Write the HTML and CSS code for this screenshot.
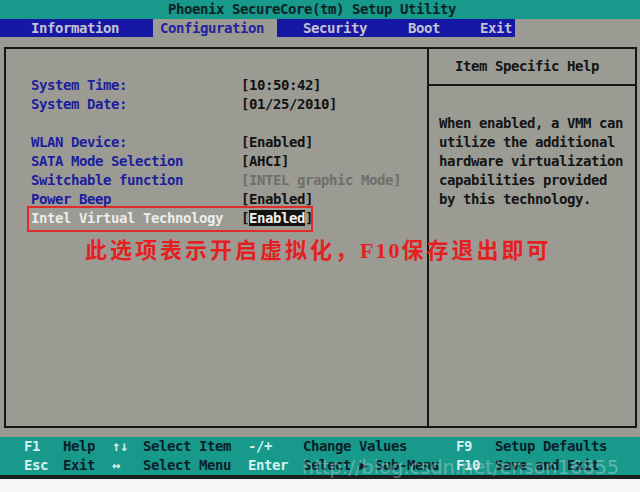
FILE: index.html
```html
<!DOCTYPE html>
<html lang="en">
<head>
<meta charset="utf-8">
<title>Phoenix SecureCore(tm) Setup Utility</title>
<link rel="stylesheet" href="styles.css">
</head>
<body>
<div class="screen">
  <div class="titlebar">Phoenix SecureCore(tm) Setup Utility</div>
  <div class="menubar">
    <div class="menu-items">
      <span class="menu-item m-info">Information</span>
      <span class="menu-item m-config active">Configuration</span>
      <span class="menu-item m-sec">Security</span>
      <span class="menu-item m-boot">Boot</span>
      <span class="menu-item m-exit">Exit</span>
    </div>
  </div>
  <div class="main">
    <div class="panel">
      <div class="settings">
        <div class="rows">
          <div class="row"><span class="label">System Time:</span><span class="value">[10:50:42]</span></div>
          <div class="row"><span class="label">System Date:</span><span class="value">[01/25/2010]</span></div>
          <div class="row spacer"></div>
          <div class="row"><span class="label">WLAN Device:</span><span class="value">[Enabled]</span></div>
          <div class="row"><span class="label">SATA Mode Selection</span><span class="value">[AHCI]</span></div>
          <div class="row"><span class="label">Switchable function</span><span class="value disabled">[INTEL graphic Mode]</span></div>
          <div class="row"><span class="label">Power Beep</span><span class="value">[Enabled]</span></div>
          <div class="row highlight"><span class="label selected">Intel Virtual Technology</span><span class="value">[<span class="cursor">Enabled</span>]</span></div>
        </div>
        <div class="note">此选项表示开启虚拟化，<span class="latin">F10</span>保存退出即可</div>
      </div>
      <div class="help">
        <div class="help-title">Item Specific Help</div>
        <div class="help-text">When enabled, a VMM can<br>utilize the additional<br>hardware virtualization<br>capabilities provided<br>by this technology.</div>
      </div>
    </div>
  </div>
  <div class="footer">
    <span class="key">F1</span><span class="desc">Help</span><span class="key">↑↓</span><span class="desc">Select Item</span><span class="key">-/+</span><span class="desc">Change Values</span><span class="key">F9</span><span class="desc">Setup Defaults</span>
    <span class="key">Esc</span><span class="desc">Exit</span><span class="key">↔</span><span class="desc">Select Menu</span><span class="key">Enter</span><span class="desc">Select ▶ Sub-Menu</span><span class="key">F10</span><span class="desc">Save and Exit</span>
  </div>
  <div class="strip"></div>
  <div class="below"></div>
  <div class="watermark">http://blog.csdn.net/enson16855</div>
</div>
</body>
</html>
```

FILE: styles.css
```css
html, body {
  margin: 0;
  padding: 0;
}

body {
  background: #f4f4f4;
}

.screen {
  position: relative;
  width: 640px;
  height: 492px;
  overflow: hidden;
  display: flex;
  flex-direction: column;
  font-family: "DejaVu Sans Mono", "Liberation Mono", monospace;
  font-weight: 700;
  font-size: 14px;
  letter-spacing: -0.43px;
  background: #9b9b93;
}

.titlebar {
  height: 19px;
  line-height: 19px;
  background: #17998b;
  color: #0b2326;
  padding-left: 168px;
  white-space: pre;
}

.menubar {
  height: 18px;
  line-height: 18px;
  display: flex;
  background: #9b9b93;
}

.menu-items {
  width: 515px;
  display: flex;
  background: #1717a6;
  color: #c3c3d3;
  white-space: pre;
}

.m-info { margin-left: 31px; }
.m-config { margin-left: 34px; padding: 0 13px 0 7px; }
.m-sec { margin-left: 26px; }
.m-boot { margin-left: 41px; }
.m-exit { margin-left: 40px; }

.menu-item.active {
  background: #9b9b93;
  color: #22229c;
}

.main {
  height: 400px;
  box-sizing: border-box;
  padding: 10px 3px 9px 4px;
}

.panel {
  height: 381px;
  box-sizing: border-box;
  border: 2px solid #151515;
  display: grid;
  grid-template-columns: 423px 1fr;
}

.settings {
  border-right: 2px solid #151515;
  padding: 27px 0 0 25px;
}

.row {
  display: grid;
  grid-template-columns: 210px auto;
  height: 19px;
  line-height: 19px;
  white-space: pre;
}

.label {
  color: #1d1d9e;
}

.value {
  color: #121212;
}

.value.disabled {
  color: #6f6f6b;
}

.row.highlight {
  width: 286px;
  height: 26px;
  box-sizing: border-box;
  margin: -3px 0 0 -4px;
  padding: 1px 0 2px 2px;
  border: 2px solid #e12a2a;
}

.label.selected {
  color: #ececec;
}

.cursor {
  background: #121212;
  color: #f2f2f2;
}

.note {
  margin: 3px 0 0 54px;
  font-family: "Noto Sans CJK SC", sans-serif;
  font-weight: 700;
  font-size: 22px;
  line-height: 26px;
  letter-spacing: 3px;
  color: #e51f1f;
  white-space: nowrap;
}

.note .latin {
  font-family: "Liberation Serif", serif;
  font-weight: 700;
  font-size: 22px;
  letter-spacing: 2px;
}

.help-title {
  height: 37px;
  box-sizing: border-box;
  border-bottom: 2px solid #151515;
  padding: 8px 0 0 26px;
  line-height: 19px;
  color: #141414;
  white-space: pre;
}

.help-text {
  padding: 28px 0 0 10px;
  line-height: 19px;
  color: #141414;
  white-space: pre;
}

.footer {
  height: 38px;
  box-sizing: border-box;
  background: #17998b;
  padding: 0 0 0 24px;
  display: grid;
  grid-template-columns: 39px 49px 31px 105px 55px 153px 39px auto;
  grid-auto-rows: 19px;
  line-height: 19px;
  align-content: center;
  white-space: pre;
}

.key {
  color: #d6f0ee;
}

.desc {
  color: #0b1f26;
}

.strip {
  height: 4px;
  background: #1b1f1e;
}

.below {
  height: 13px;
  background: #f6f6f6;
}

.watermark {
  position: absolute;
  left: 302px;
  top: 455px;
  font-family: "DejaVu Sans", sans-serif;
  font-weight: 400;
  font-size: 19px;
  line-height: 24px;
  letter-spacing: 0.2px;
  color: rgba(235, 235, 235, 0.35);
  white-space: nowrap;
}
```
